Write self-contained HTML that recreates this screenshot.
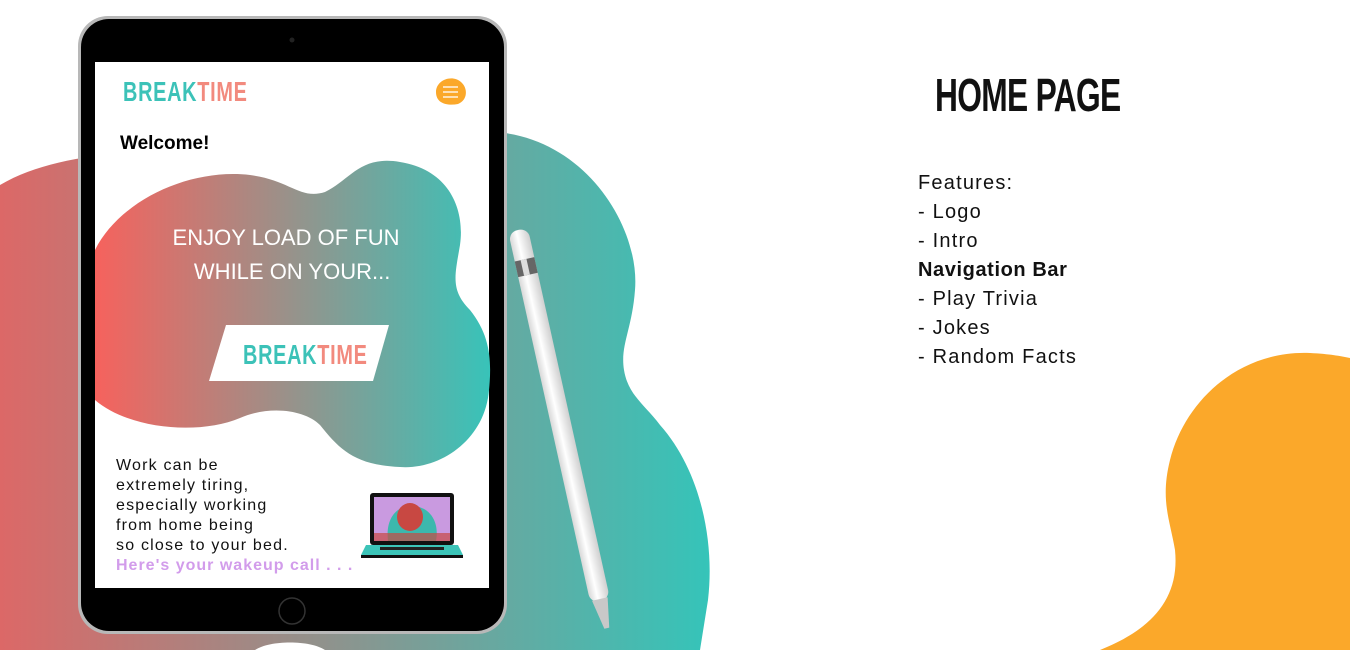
<!DOCTYPE html>
<html><head><style>
body{margin:0;width:1350px;height:650px;overflow:hidden;background:#fff;position:relative;font-family:"Liberation Sans",sans-serif}
.a{position:absolute}
.logo{font-weight:bold;letter-spacing:1px;transform:scaleX(.71);transform-origin:0 0;white-space:nowrap}
</style></head><body>
<svg class="a" style="left:0;top:0" width="1350" height="650">
<defs>
<linearGradient id="g" x1="0" x2="1"><stop offset="0" stop-color="#dc6867"/><stop offset="1" stop-color="#35c4b9"/></linearGradient>
<linearGradient id="g2" x1="0" x2="1"><stop offset="0" stop-color="#f6625d"/><stop offset="1" stop-color="#38c3b9"/></linearGradient>
<linearGradient id="pen" x1="0" x2="1"><stop offset="0" stop-color="#d8d8d8"/><stop offset=".4" stop-color="#fff"/><stop offset="1" stop-color="#cfcfcf"/></linearGradient>
</defs>
<path d="M0 185 C60 150 150 150 240 150 C330 150 420 125 505 133 C590 145 640 230 635 290 C632 330 620 345 624 370 C628 395 645 405 660 425 C700 470 715 540 708 600 L700 650 L0 650 Z" fill="url(#g)"/>
<path d="M255 650 C270 640 310 640 325 650 Z" fill="#fff"/>
<path d="M1100 650 C1150 630 1180 600 1175 550 C1170 520 1160 500 1170 460 C1185 400 1240 350 1310 353 C1330 354 1340 356 1350 358 L1350 650 Z" fill="#fba82a"/>
<rect x="78" y="16" width="429" height="618" rx="30" fill="#b8b8b8"/>
<rect x="81" y="19" width="423" height="612" rx="28" fill="#000"/>
<circle cx="292" cy="40" r="2.5" fill="#222"/>
<rect x="95" y="62" width="394" height="526" fill="#fff"/>
<circle cx="292" cy="611" r="13" fill="none" stroke="#333" stroke-width="1.5"/>
<path d="M95 250 C120 200 190 168 250 175 C290 180 300 200 325 192 C350 180 360 155 400 162 C450 170 465 210 460 245 C455 275 450 290 470 310 C490 335 492 360 489 390 C485 440 440 470 400 467 C355 465 340 450 320 425 C305 410 270 405 240 418 C200 435 130 430 95 400 Z" fill="url(#g2)"/>
<polygon points="226,325 389,325 373,381 209,381" fill="#fff"/>
<path d="M436 92 C436 80 452 74 461 82 C468 88 468 100 458 104 C448 106 436 104 436 92Z" fill="#fba82a"/>
<g stroke="#fff" stroke-width="1.3"><line x1="443" y1="87" x2="458" y2="87"/><line x1="443" y1="92" x2="458" y2="92"/><line x1="443" y1="97" x2="458" y2="97"/></g>
<g transform="translate(518,230) rotate(-12.5)">
<rect x="-10" y="0" width="20" height="380" rx="9" fill="url(#pen)"/>
<rect x="-10" y="30" width="20" height="16" fill="#666"/>
<rect x="-4" y="30" width="6" height="16" fill="#ddd"/>
<polygon points="-8,378 8,378 3,408 -2,408" fill="#c8c8c8"/>
</g>
<rect x="370" y="493" width="84" height="52" rx="3" fill="#111"/>
<rect x="374" y="497" width="76" height="44" fill="#c99ae0"/>
<path d="M388 541 C385 515 400 505 412 506 C428 506 440 520 436 541Z" fill="#3cb8ad"/>
<ellipse cx="410" cy="517" rx="13" ry="14" fill="#c84842"/>
<rect x="374" y="533" width="76" height="8" fill="#c84842" opacity=".7"/>
<polygon points="366,545 458,545 463,555 361,555" fill="#3cc4b8"/>
<rect x="361" y="555" width="102" height="3" fill="#111"/>
<rect x="380" y="547" width="64" height="3" fill="#222"/>
</svg>
<div class="a logo" style="left:123px;top:76px;font-size:28px;color:#3cc2b8">BREAK<span style="color:#f28a7e">TIME</span></div>
<div class="a" style="left:120px;top:133px;font-size:19px;font-weight:bold;color:#000">Welcome!</div>
<div class="a" style="left:161px;top:221px;width:250px;text-align:center;font-size:22px;color:#fff;line-height:34px;letter-spacing:0">ENJOY LOAD OF FUN<br>&nbsp;&nbsp;WHILE ON YOUR...</div>
<div class="a logo" style="left:243px;top:339px;font-size:28px;color:#3cc2b8">BREAK<span style="color:#f28a7e">TIME</span></div>
<div class="a" style="left:116px;top:456px;font-size:16px;line-height:20px;color:#111;letter-spacing:1.2px">Work can be<br>extremely tiring,<br>especially working<br>from home being<br>so close to your bed.<br><b style="color:#d29ceb;letter-spacing:1px">Here's your wakeup call . . .</b></div>
<div class="a logo" style="left:935px;top:68px;font-size:46px;color:#111;font-weight:900;letter-spacing:-1px;transform:scaleX(.69)">HOME PAGE</div>
<div class="a" style="left:918px;top:169px;font-size:20px;line-height:29px;color:#111;letter-spacing:1.2px">Features:<br>- Logo<br>- Intro<br><b style="letter-spacing:.6px">Navigation Bar</b><br>- Play Trivia<br>- Jokes<br>- Random Facts</div>
</body></html>
